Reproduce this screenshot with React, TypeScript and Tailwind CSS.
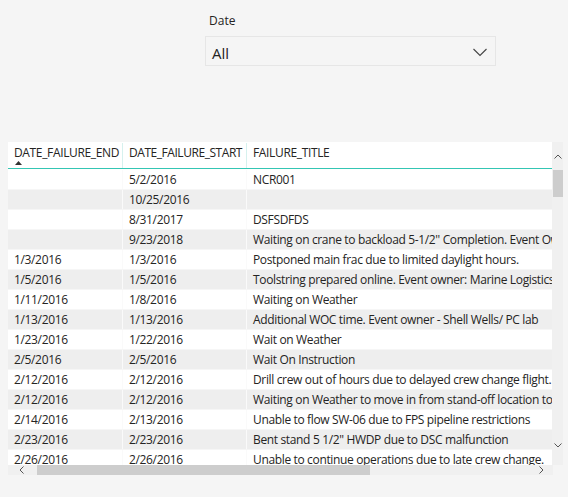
import React from "react";

const rows: [string, string, string][] = [
  ["", "5/2/2016", "NCR001"],
  ["", "10/25/2016", ""],
  ["", "8/31/2017", "DSFSDFDS"],
  ["", "9/23/2018", "Waiting on crane to backload 5-1/2'' Completion. Event Owner: Marine Logistics"],
  ["1/3/2016", "1/3/2016", "Postponed main frac due to limited daylight hours."],
  ["1/5/2016", "1/5/2016", "Toolstring prepared online. Event owner: Marine Logistics team"],
  ["1/11/2016", "1/8/2016", "Waiting on Weather"],
  ["1/13/2016", "1/13/2016", "Additional WOC time. Event owner - Shell Wells/ PC lab"],
  ["1/23/2016", "1/22/2016", "Wait on Weather"],
  ["2/5/2016", "2/5/2016", "Wait On Instruction"],
  ["2/12/2016", "2/12/2016", "Drill crew out of hours due to delayed crew change flight."],
  ["2/12/2016", "2/12/2016", "Waiting on Weather to move in from stand-off location to rig"],
  ["2/14/2016", "2/13/2016", "Unable to flow SW-06 due to FPS pipeline restrictions"],
  ["2/23/2016", "2/23/2016", "Bent stand 5 1/2\" HWDP due to DSC malfunction"],
  ["2/26/2016", "2/26/2016", "Unable to continue operations due to late crew change."],
];

const Chev = ({ d, w, h, sw = 1 }: { d: string; w: number; h: number; sw?: number }) => (
  <svg width={w} height={h} viewBox={`0 0 ${w} ${h}`} fill="none">
    <path d={d} stroke="#555" strokeWidth={sw} />
  </svg>
);

export default function App() {
  return (
    <div
      className="w-[568px] h-[497px] bg-[#f5f5f5] text-[#252423] overflow-hidden"
      style={{ fontFamily: '"Open Sans", "Noto Sans", sans-serif' }}
    >
      {/* Slicer */}
      <div className="ml-[205px] pt-[12px] w-[291px]">
        <div className="pl-[4px] text-[12px] leading-[18px] text-[#252423]">Date</div>
        <div className="mt-[6px] h-[30px] border border-[#e6e6e6] flex items-center justify-between pl-[6px] pr-[7px]">
          <span className="text-[15px] leading-[20px] pt-[3px]">All</span>
          <svg width="16" height="10" viewBox="0 0 16 10" fill="none" className="mt-[2px]">
            <path d="M1.5 2 L8 8.5 L14.5 2" stroke="#444" strokeWidth="1.1" />
          </svg>
        </div>
      </div>

      {/* Table */}
      <div className="ml-[8px] mt-[76px] w-[555px] h-[333px] grid grid-cols-[544px_11px] grid-rows-[323px_10px]">
        <div className="bg-white overflow-hidden text-[12px] text-[#252423]">
          {/* header */}
          <div className="flex h-[26px] border-b border-[#34c6b4] mt-[1px]">
            <div className="w-[115px] shrink-0 border-r border-[#d6f1ee] pl-[6px] relative">
              <div className="leading-[18px] pt-[1px] whitespace-nowrap tracking-[-0.35px]">DATE_FAILURE_END</div>
              <svg className="absolute left-[7px] top-[18px]" width="7" height="4" viewBox="0 0 7 4">
                <path d="M0 4 L3.5 0 L7 4 Z" fill="#333" />
              </svg>
            </div>
            <div className="w-[124px] shrink-0 border-r border-[#d6f1ee] pl-[6px]">
              <div className="leading-[18px] pt-[1px] whitespace-nowrap tracking-[-0.45px]">DATE_FAILURE_START</div>
            </div>
            <div className="flex-1 pl-[6px]">
              <div className="leading-[18px] pt-[1px] whitespace-nowrap tracking-[-0.35px]">FAILURE_TITLE</div>
            </div>
          </div>
          {rows.map((r, i) => (
            <div
              key={i}
              className={`flex h-[20px] ${i % 2 === 1 ? "bg-[#eeeeee]" : "bg-white"} border-t ${i === 0 ? "border-white" : "border-[#f6f6f6]"}`}
            >
              <div className="w-[115px] shrink-0 border-r border-[#fafafa] pl-[6px] leading-[19px] whitespace-nowrap overflow-hidden tracking-[-0.35px]">
                {r[0]}
              </div>
              <div className="w-[124px] shrink-0 border-r border-[#fafafa] pl-[6px] leading-[19px] whitespace-nowrap overflow-hidden tracking-[-0.35px]">
                {r[1]}
              </div>
              <div className="flex-1 pl-[6px] leading-[19px] whitespace-nowrap overflow-hidden tracking-[-0.35px]">
                {r[2]}
              </div>
            </div>
          ))}
        </div>
        {/* vertical scrollbar */}
        <div className="bg-[#f0f0f0] flex flex-col items-center">
          <div className="h-[28px] flex items-center justify-center pt-[1px]">
            <Chev w={8} h={5} d="M0.5 4.5 L4 1 L7.5 4.5" />
          </div>
          <div className="w-[10px] h-[27px] bg-[#cdcdcd]" />
          <div className="flex-1" />
          <div className="h-[22px] flex items-start justify-center">
            <Chev w={8} h={5} d="M0.5 0.5 L4 4 L7.5 0.5" />
          </div>
        </div>
        {/* horizontal scrollbar */}
        <div className="bg-[#f0f0f0] flex items-center w-[545px]">
          <div className="w-[29px] h-full flex items-center justify-center pr-[2px]">
            <Chev w={5} h={8} d="M4.5 0.5 L1 4 L4.5 7.5" />
          </div>
          <div className="w-[333px] h-full bg-[#cdcdcd]" />
          <div className="flex-1" />
          <div className="w-[24px] h-full flex items-center justify-center">
            <Chev w={5} h={8} d="M0.5 0.5 L4 4 L0.5 7.5" />
          </div>
        </div>
        <div />
      </div>
    </div>
  );
}
